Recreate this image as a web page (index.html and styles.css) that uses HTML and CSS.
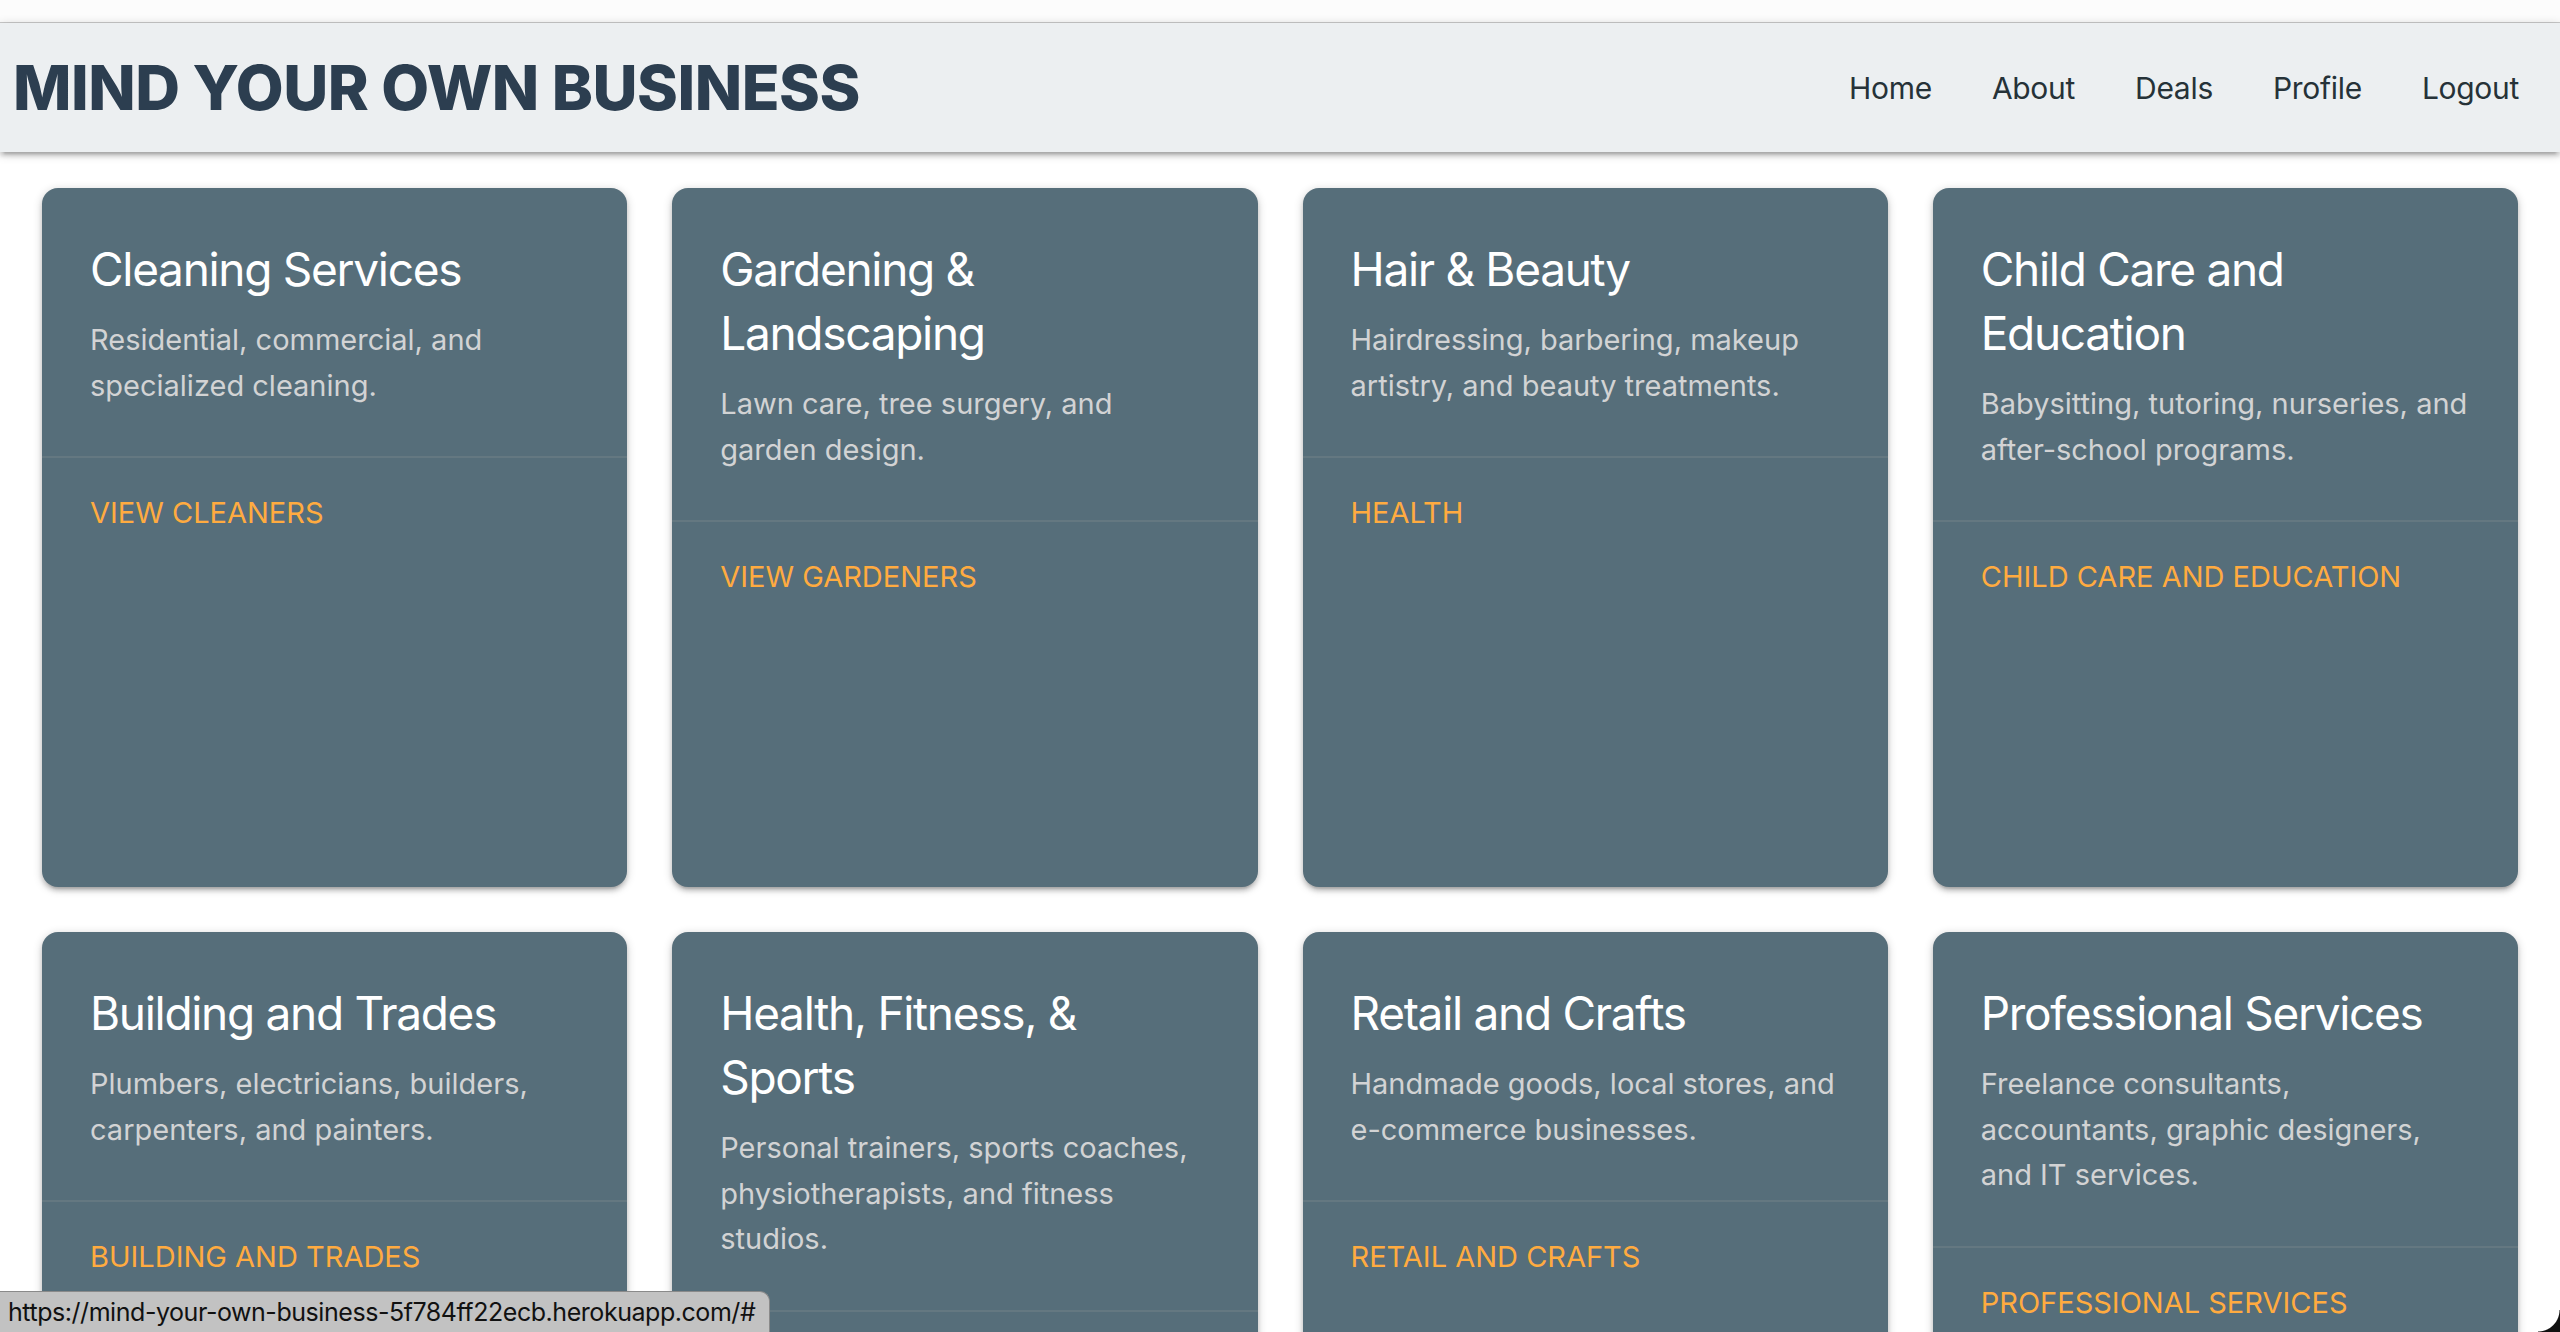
FILE: index.html
```html
<!DOCTYPE html>
<html lang="en">
<head>
<meta charset="utf-8">
<title>Mind Your Own Business</title>
<link rel="stylesheet" href="styles.css">
</head>
<body>
<div class="topstrip"></div>
<header class="nav">
  <a class="brand" href="#">MIND YOUR OWN BUSINESS</a>
  <ul class="menu">
    <li><a href="#">Home</a></li>
    <li><a href="#">About</a></li>
    <li><a href="#">Deals</a></li>
    <li><a href="#">Profile</a></li>
    <li><a href="#">Logout</a></li>
  </ul>
</header>
<main class="grid">
  <div class="card">
    <div class="card-content">
      <span class="card-title">Cleaning Services</span>
      <p>Residential, commercial, and specialized cleaning.</p>
    </div>
    <div class="card-action"><a href="#">View Cleaners</a></div>
  </div>
  <div class="card">
    <div class="card-content">
      <span class="card-title">Gardening &amp; Landscaping</span>
      <p>Lawn care, tree surgery, and garden design.</p>
    </div>
    <div class="card-action"><a href="#">View Gardeners</a></div>
  </div>
  <div class="card">
    <div class="card-content">
      <span class="card-title">Hair &amp; Beauty</span>
      <p>Hairdressing, barbering, makeup artistry, and beauty treatments.</p>
    </div>
    <div class="card-action"><a href="#">Health</a></div>
  </div>
  <div class="card">
    <div class="card-content">
      <span class="card-title">Child Care and Education</span>
      <p>Babysitting, tutoring, nurseries, and after-school programs.</p>
    </div>
    <div class="card-action"><a href="#">Child Care and Education</a></div>
  </div>
  <div class="card">
    <div class="card-content">
      <span class="card-title">Building and Trades</span>
      <p>Plumbers, electricians, builders, carpenters, and painters.</p>
    </div>
    <div class="card-action"><a href="#">Building and Trades</a></div>
  </div>
  <div class="card">
    <div class="card-content">
      <span class="card-title">Health, Fitness, &amp; Sports</span>
      <p>Personal trainers, sports coaches, physiotherapists, and fitness studios.</p>
    </div>
    <div class="card-action"><a href="#">Health, Fitness, &amp; Sports</a></div>
  </div>
  <div class="card">
    <div class="card-content">
      <span class="card-title">Retail and Crafts</span>
      <p>Handmade goods, local stores, and e-commerce businesses.</p>
    </div>
    <div class="card-action"><a href="#">Retail and Crafts</a></div>
  </div>
  <div class="card">
    <div class="card-content">
      <span class="card-title">Professional Services</span>
      <p>Freelance consultants, accountants, graphic designers, and IT services.</p>
    </div>
    <div class="card-action"><a href="#">Professional Services</a></div>
  </div>
</main>
<div class="statusbar">https://mind-your-own-business-5f784ff22ecb.herokuapp.com/#</div>
<div class="corner"></div>
</body>
</html>
```

FILE: styles.css
```css
html, body {
  margin: 0;
  padding: 0;
  background: #ffffff;
  overflow: hidden;
  height: 1332px;
}
body {
  font-family: "Inter", "Roboto", sans-serif;
  color: #263238;
}
.topstrip {
  height: 22px;
  background: #fcfcfc;
  border-bottom: 1px solid #c9c9c9;
}
.nav {
  height: 129px;
  background: #eceff1;
  display: flex;
  align-items: center;
  justify-content: space-between;
  padding: 0 11px 0 13px;
  box-shadow: 0 4px 4px 0 rgba(0,0,0,0.14), 0 6px 2px -4px rgba(0,0,0,0.12), 0 2px 10px 0 rgba(0,0,0,0.2);
  position: relative;
  z-index: 2;
}
.brand {
  font-family: "Inter", sans-serif;
  font-weight: 800;
  font-size: 62px;
  letter-spacing: -0.5px;
  color: #2c3e50;
  text-decoration: none;
  line-height: 1;
}
.menu {
  list-style: none;
  margin: 0;
  padding: 0;
  display: flex;
}
.menu a {
  display: block;
  padding: 0 30px;
  font-size: 30px;
  letter-spacing: -0.3px;
  color: #263238;
  text-decoration: none;
  line-height: 128px;
}
.grid {
  display: grid;
  grid-template-columns: repeat(4, 1fr);
  column-gap: 45px;
  row-gap: 45px;
  padding: 36px 42px 0 42px;
}
.card {
  height: 699px;
  background: #566e7a;
  border-radius: 16px;
  box-shadow: 0 4px 4px 0 rgba(0,0,0,0.14), 0 6px 2px -4px rgba(0,0,0,0.12), 0 2px 10px 0 rgba(0,0,0,0.2);
  display: flex;
  flex-direction: column;
}
.card-content {
  padding: 48px;
}
.card-title {
  display: block;
  font-size: 46px;
  line-height: 64px;
  letter-spacing: -1.3px;
  color: #ffffff;
  margin-bottom: 16px;
  padding-top: 1px;
}
.card-content p {
  margin: 0;
  font-size: 29px;
  line-height: 45.5px;
  letter-spacing: 0;
  color: #d2d3d4;
}
.card-action {
  border-top: 2px solid rgba(160,160,160,0.2);
  padding: 32px 48px;
}
.card-action a {
  font-size: 29px;
  line-height: 45px;
  letter-spacing: 0;
  text-transform: uppercase;
  color: #ffab40;
  text-decoration: none;
}
.statusbar {
  position: fixed;
  left: 0;
  bottom: 0;
  height: 40px;
  padding: 0 14px 0 8px;
  background: #c2c2c2;
  border-top: 1px solid #8a8a8a;
  border-right: 1px solid #8a8a8a;
  border-top-right-radius: 10px;
  font-size: 25px;
  line-height: 40px;
  letter-spacing: -0.45px;
  color: #111111;
  z-index: 5;
}
.corner {
  position: fixed;
  right: 0;
  bottom: 0;
  width: 22px;
  height: 22px;
  background: radial-gradient(circle at 0 0, transparent 21px, #111 22px);
  z-index: 6;
}
```
